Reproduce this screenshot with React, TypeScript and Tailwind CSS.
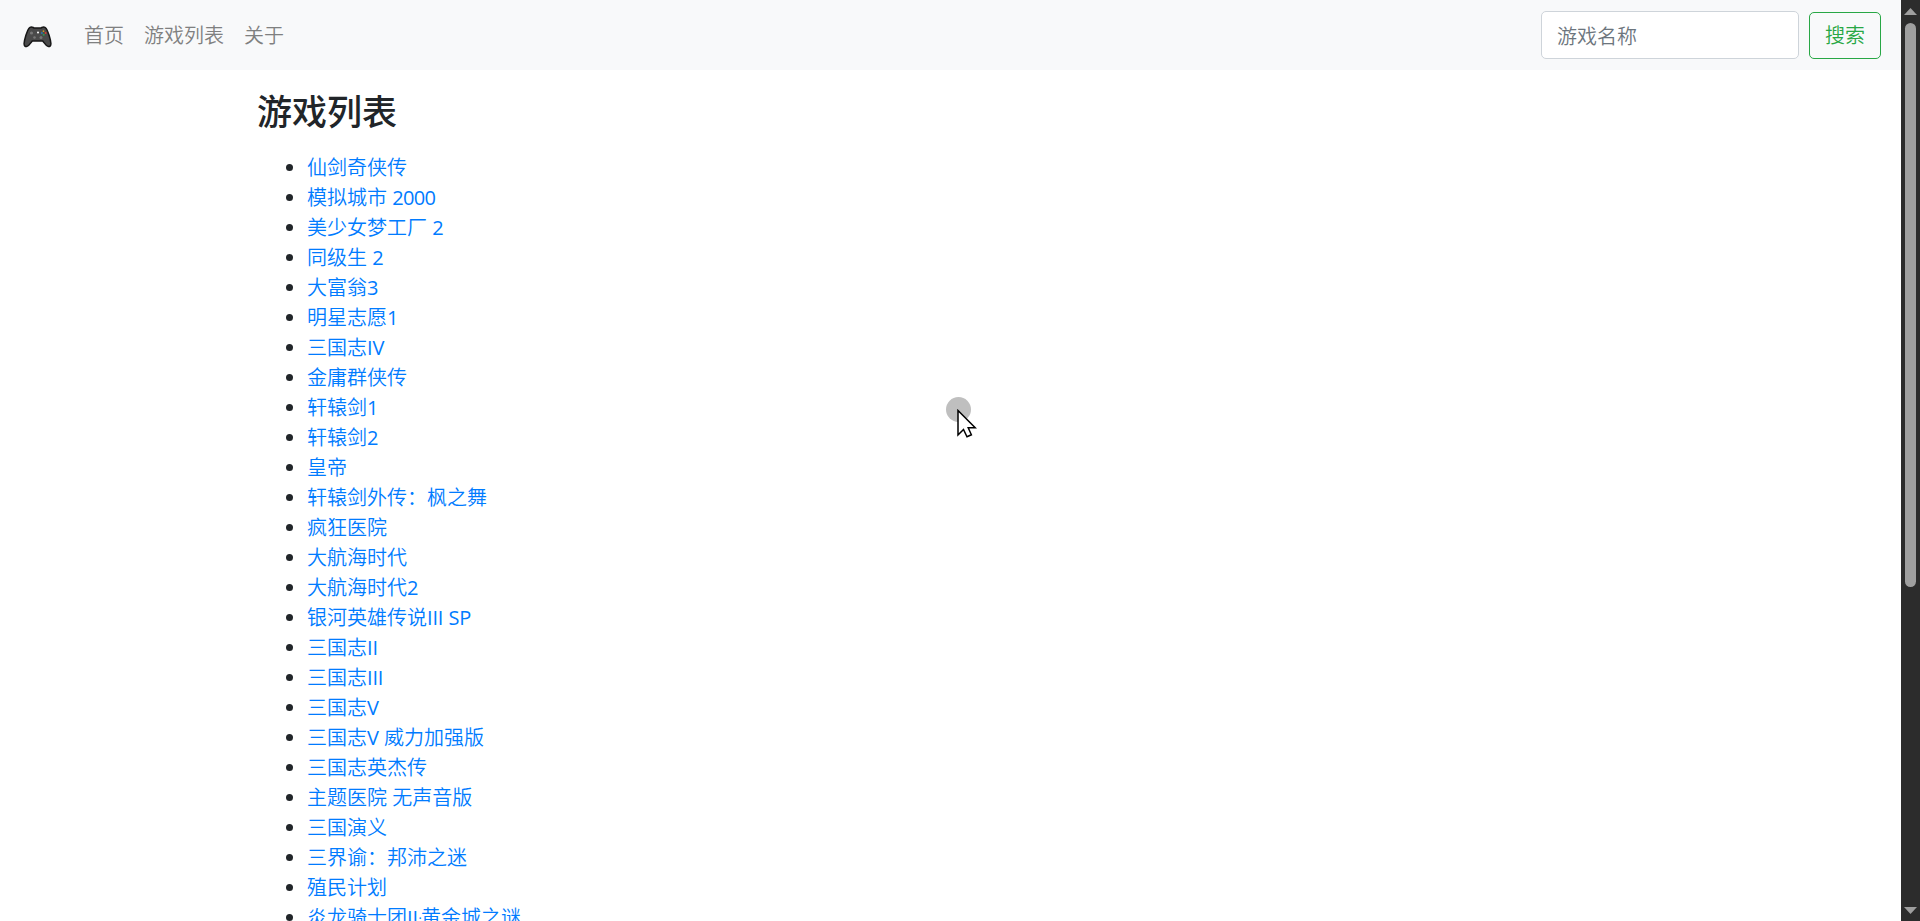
import React from "react";

const navLinks = ["首页", "游戏列表", "关于"];

const games = [
  "仙剑奇侠传",
  "模拟城市 2000",
  "美少女梦工厂 2",
  "同级生 2",
  "大富翁3",
  "明星志愿1",
  "三国志IV",
  "金庸群侠传",
  "轩辕剑1",
  "轩辕剑2",
  "皇帝",
  "轩辕剑外传：枫之舞",
  "疯狂医院",
  "大航海时代",
  "大航海时代2",
  "银河英雄传说III SP",
  "三国志II",
  "三国志III",
  "三国志V",
  "三国志V 威力加强版",
  "三国志英杰传",
  "主题医院 无声音版",
  "三国演义",
  "三界谕：邦沛之迷",
  "殖民计划",
  "炎龙骑士团II·黄金城之谜",
];

function GamepadIcon() {
  return (
    <svg width="29" height="22" viewBox="0 0 29 22" aria-hidden="true">
      <path
        d="M6 2.2C7 .9 9 .8 10.200 1.500L11 2H18L18.800 1.500C20 .8 22 .9 23 2.200C25 4.600 27.600 13.500 27.900 17.500C28 20 26.600 20.900 25 20.400C22.800 19.700 21 16.500 19.700 15H9.300C8 16.500 6.200 19.700 4 20.400C2.400 20.900 1 20 1.100 17.500C1.400 13.500 4 4.600 6 2.200Z"
        fill="#4a4a4a"
        stroke="#171717"
        strokeWidth="1.500"
      />
      <circle cx="8.500" cy="7" r="1.600" fill="#777" />
      <circle cx="11.500" cy="11.500" r="1.300" fill="#777" />
      <circle cx="18" cy="11.500" r="1.500" fill="#777" />
      <circle cx="15" cy="6.600" r="1" fill="#fff" />
      <circle cx="20.500" cy="5.200" r=".9" fill="#c99a21" />
      <circle cx="22.600" cy="7" r="1" fill="#d63a32" />
      <circle cx="18.900" cy="7" r=".9" fill="#287fb9" />
      <circle cx="20.700" cy="8.800" r="1" fill="#2e9b4f" />
    </svg>
  );
}

function Title({ text }: { text: string }) {
  return (
    <>
      {text.split(/([A-Za-z]+|[0-9]+|·)/).map((part, i) =>
        /^[A-Za-z]+$/.test(part) ? (
          <span key={i} className="font-normal tracking-[-0.2px]">{part}</span>
        ) : /^[0-9]+$/.test(part) ? (
          <span key={i} className="font-normal tracking-[-0.66px]">{part}</span>
        ) : part === "·" ? (
          <span key={i} className="tracking-[-1.500px]">{part}</span>
        ) : (
          part
        ),
      )}
    </>
  );
}

function Navbar() {
  return (
    <nav className="flex h-[70px] shrink-0 items-center bg-[#f8f9fa] pr-5 pl-[23px] text-[20px] leading-[30px]">
      <a href="#" className="mt-1">
        <GamepadIcon />
      </a>
      <ul className="mt-0.5 ml-[32px] flex gap-5 text-[#7f8080]">
        {navLinks.map((label) => (
          <li key={label}>
            <a href="#">{label}</a>
          </li>
        ))}
      </ul>
      <form className="ml-auto flex items-end">
        <input
          placeholder="游戏名称"
          className="h-12 w-[258px] rounded-[5px] border border-[#ced4da] bg-white px-[15px] pt-0.5 placeholder:text-[#6c757d]"
        />
        <button
          type="button"
          className="ml-[10px] h-[47px] w-[72px] rounded-[5px] border border-[#28a745] text-[#28a745]"
        >
          搜索
        </button>
      </form>
    </nav>
  );
}

function Scrollbar() {
  return (
    <div className="flex w-[19px] shrink-0 flex-col items-center bg-[#2c2c2c]">
      <svg width="13" height="7" viewBox="0 0 13 7" className="mt-2 shrink-0">
        <path d="M6.500 0L13 7H0Z" fill="#9f9f9f" />
      </svg>
      <div className="mt-2 h-[564px] w-[11px] shrink-0 rounded-full bg-[#9f9f9f]" />
      <svg width="13" height="7" viewBox="0 0 13 7" className="mt-auto mb-[7px] shrink-0">
        <path d="M0 0H13L6.500 7Z" fill="#9f9f9f" />
      </svg>
    </div>
  );
}

function Pointer() {
  return (
    <div className="absolute top-[397px] left-[946px]">
      <div className="size-[25px] rounded-full bg-[#bfbfbf]" />
      <svg width="20" height="29" viewBox="0 0 20 29" className="absolute top-[12px] left-[11px]">
        <path
          d="M1 1.500V26L6.500 20.500L10 27.800L14.400 25.800L11.200 18.700H18.200Z"
          fill="#fff"
          stroke="#000"
          strokeWidth="1.500"
        />
      </svg>
    </div>
  );
}

export default function App() {
  return (
    <div className="relative flex h-[921px] overflow-hidden bg-white font-['Open_Sans','Noto_Sans_CJK_SC',sans-serif] font-[350] text-[#212529]">
      <div className="flex min-w-0 flex-1 flex-col overflow-hidden">
        <Navbar />
        <main className="mx-auto w-[1425px] px-[19px] pt-[21px]">
          <h1 className="text-[35px] leading-[42px] font-medium">游戏列表</h1>
          <ul className="mt-5 list-disc pl-[50px] text-[20px] leading-[30px]">
            {games.map((game) => (
              <li key={game} className="h-[30px]">
                <a href="#" className="whitespace-nowrap text-[#007bff]">
                  <Title text={game} />
                </a>
              </li>
            ))}
          </ul>
        </main>
      </div>
      <Scrollbar />
      <Pointer />
    </div>
  );
}
